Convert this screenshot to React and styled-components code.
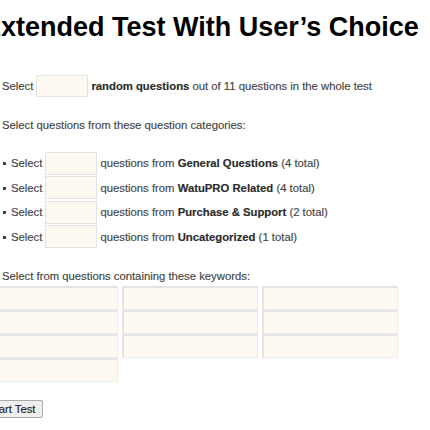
import React from "react";
import styled, { createGlobalStyle } from "styled-components";

const Global = createGlobalStyle`
  html, body { margin: 0; padding: 0; background: #fff; overflow: hidden; }
  body { font-family: "Liberation Sans", Arial, sans-serif; color: #444; }
`;

const Page = styled.div`
  width: 430px;
  height: 430px;
  display: flex;
  flex-direction: column;
  font-size: 11.3px;
  -webkit-text-stroke: 0.15px currentColor;
`;

const Title = styled.h1`
  margin: 12px 0 0 -17px;
  font-size: 27px;
  line-height: 31px;
  font-weight: bold;
  color: #000;
  white-space: nowrap;
  -webkit-text-stroke: 0;
`;

const Line = styled.div`
  margin-top: ${(p) => p.$mt}px;
  padding-left: 2px;
  line-height: 16px;
  display: flex;
  align-items: center;
  white-space: pre;
`;

const Bold = styled.b`
  color: #2a2a2a;
`;

const NumInput = styled.input`
  box-sizing: border-box;
  width: 52px;
  height: ${(p) => p.$h || 22}px;
  margin: 0 3px;
  padding: 0 4px;
  background: #fefaf2;
  border: 1px solid #e3e3e3;
  font: inherit;
  outline: none;
`;

const List = styled.ul`
  list-style: none;
  margin: 18px 0 0;
  padding: 0;
`;

const Item = styled.li`
  height: 24.5px;
  display: flex;
  align-items: center;
  padding-left: 11px;
  position: relative;
  white-space: pre;
  &::before {
    content: "";
    position: absolute;
    left: 3px;
    top: 11px;
    width: 3px;
    height: 3px;
    background: #444;
  }
`;

const KeywordGrid = styled.div`
  margin: 2px 0 0 -18px;
  display: grid;
  grid-template-columns: repeat(3, 136px);
  grid-auto-rows: 24px;
  column-gap: 4px;
`;

const KeywordInput = styled.input`
  box-sizing: border-box;
  width: 100%;
  height: 100%;
  background: #fefaf2;
  border-style: solid;
  border-width: 2px 1px 1px 2px;
  border-color: #e4e4e4 #ebebeb #ebebeb #e4e4e4;
  outline: none;
  font: inherit;
`;

const StartButton = styled.button`
  align-self: flex-start;
  margin: 18px 0 0 -19px;
  height: 18px;
  padding: 0 6px;
  font-family: "Liberation Sans", Arial, sans-serif;
  font-size: 11.3px;
  color: #222;
  -webkit-text-stroke: 0.15px #222;
  background: #efefef;
  border: 1px solid #a9a9a9;
  border-radius: 2px;
`;

const categories = [
  ["General Questions", 4],
  ["WatuPRO Related", 4],
  ["Purchase & Support", 2],
  ["Uncategorized", 1],
];

export default function App() {
  return (
    <Page>
      <Global />
      <Title>Extended Test With User’s Choice</Title>
      <Line $mt={32}>
        Select<NumInput type="text" />
        <Bold>random questions</Bold> out of 11 questions in the whole test
      </Line>
      <Line $mt={20}>Select questions from these question categories:</Line>
      <List>
        {categories.map(([name, total]) => (
          <Item key={name}>
            Select<NumInput type="text" $h={23} />
            questions from <Bold>{name}</Bold> ({total} total)
          </Item>
        ))}
      </List>
      <Line $mt={18.75}>Select from questions containing these keywords:</Line>
      <KeywordGrid>
        {Array.from({ length: 10 }).map((_, i) => (
          <KeywordInput key={i} type="text" />
        ))}
      </KeywordGrid>
      <StartButton type="button">Start Test</StartButton>
    </Page>
  );
}
